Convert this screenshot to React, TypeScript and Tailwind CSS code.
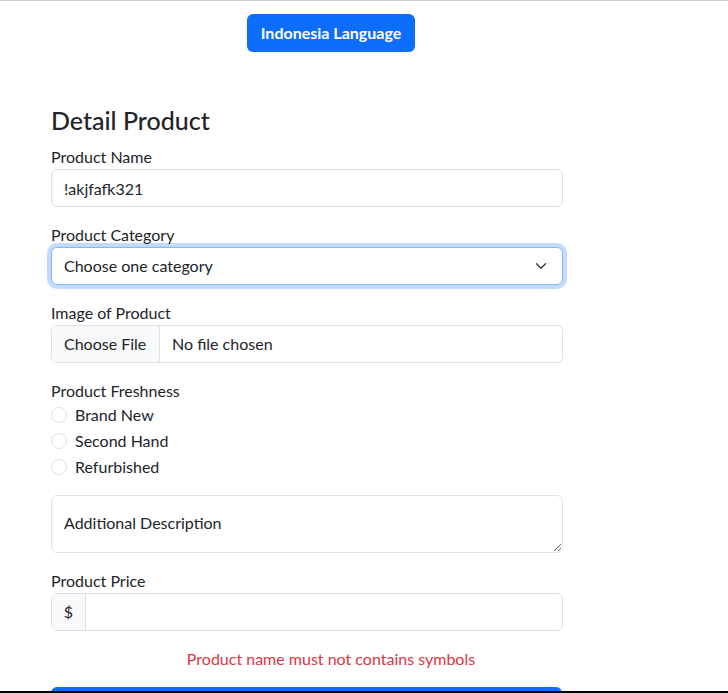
import React from 'react';

const labelCls = 'block text-[16px] leading-6 text-[#212529]';
const boxCls = 'h-[38px] w-full rounded-[6px] border border-[#dee2e6] bg-white';

const Radio: React.FC<{ label: string }> = ({ label }) => (
  <label className="mb-[2px] flex h-6 items-center">
    <span className="h-4 w-4 rounded-full border border-[#dee2e6] bg-white" />
    <span className="ml-2 text-[16px] text-[#212529]">{label}</span>
  </label>
);

export default function App() {
  return (
    <div className="min-h-[693px] border-t border-[#cccccc] bg-white font-['Lato',sans-serif] text-[#212529]">
      <div className="w-[662px]">
        <div className="pt-[13px] text-center">
          <button className="h-[38px] rounded-[6px] bg-[#0d6efd] px-[14px] text-[16px] font-bold text-white">
            Indonesia Language
          </button>
        </div>

        <form className="ml-[51px] mt-[55px] w-[512px]">
          <h3 className="mb-3 text-[25px] leading-[26px] font-medium">Detail Product</h3>

          <div className="mb-4">
            <label className={labelCls}>Product Name</label>
            <input
              type="text"
              defaultValue="!akjfafk321"
              className={`${boxCls} px-3 text-[16px] text-[#212529] outline-none`}
            />
          </div>

          <div className="mb-4">
            <label className={labelCls}>Product Category</label>
            <div className="flex h-[38px] w-full items-center justify-between rounded-[6px] border border-[#86b7fe] bg-white px-3 shadow-[0_0_0_4px_rgba(13,110,253,0.25)]">
              <span className="text-[16px]">Choose one category</span>
              <svg width="12" height="12" viewBox="0 0 16 16" className="mr-[3px]">
                <path d="m2 5 6 6 6-6" fill="none" stroke="#343a40" strokeWidth="1.8" strokeLinecap="round" strokeLinejoin="round" />
              </svg>
            </div>
          </div>

          <div className="mb-4">
            <label className={labelCls}>Image of Product</label>
            <div className={`${boxCls} flex overflow-hidden`}>
              <div className="flex w-[108px] items-center border-r border-[#dee2e6] bg-[#f8f9fa] px-3 text-[16px]">
                Choose File
              </div>
              <div className="flex items-center px-3 text-[16px]">No file chosen</div>
            </div>
          </div>

          <div className="mb-4">
            <label className={labelCls}>Product Freshness</label>
            <Radio label="Brand New" />
            <Radio label="Second Hand" />
            <Radio label="Refurbished" />
          </div>

          <div className="mb-4">
            <textarea
              placeholder="Additional Description"
              className="block h-[58px] w-full rounded-[6px] border border-[#dee2e6] bg-white px-3 pt-[15px] text-[16px] leading-6 outline-none placeholder:text-[#212529]"
            />
          </div>

          <div className="mb-4">
            <label className={labelCls}>Product Price</label>
            <div className={`${boxCls} flex overflow-hidden`}>
              <div className="flex w-[34px] items-center justify-center border-r border-[#dee2e6] bg-[#f8f9fa] text-[16px]">
                $
              </div>
              <input type="text" className="flex-1 px-3 text-[16px] outline-none" />
            </div>
          </div>
        </form>

        <p className="text-center text-[16px] leading-6 text-[#dc3545]">Product name must not contains symbols</p>

        <div className="ml-[51px] mt-4 w-[511px]">
          <button className="h-[38px] w-full rounded-[6px] bg-[#0d6efd] pt-3 text-[16px] text-white">Submit</button>
        </div>
      </div>
      <div className="fixed bottom-0 left-0 h-[2px] w-full bg-black" />
    </div>
  );
}
